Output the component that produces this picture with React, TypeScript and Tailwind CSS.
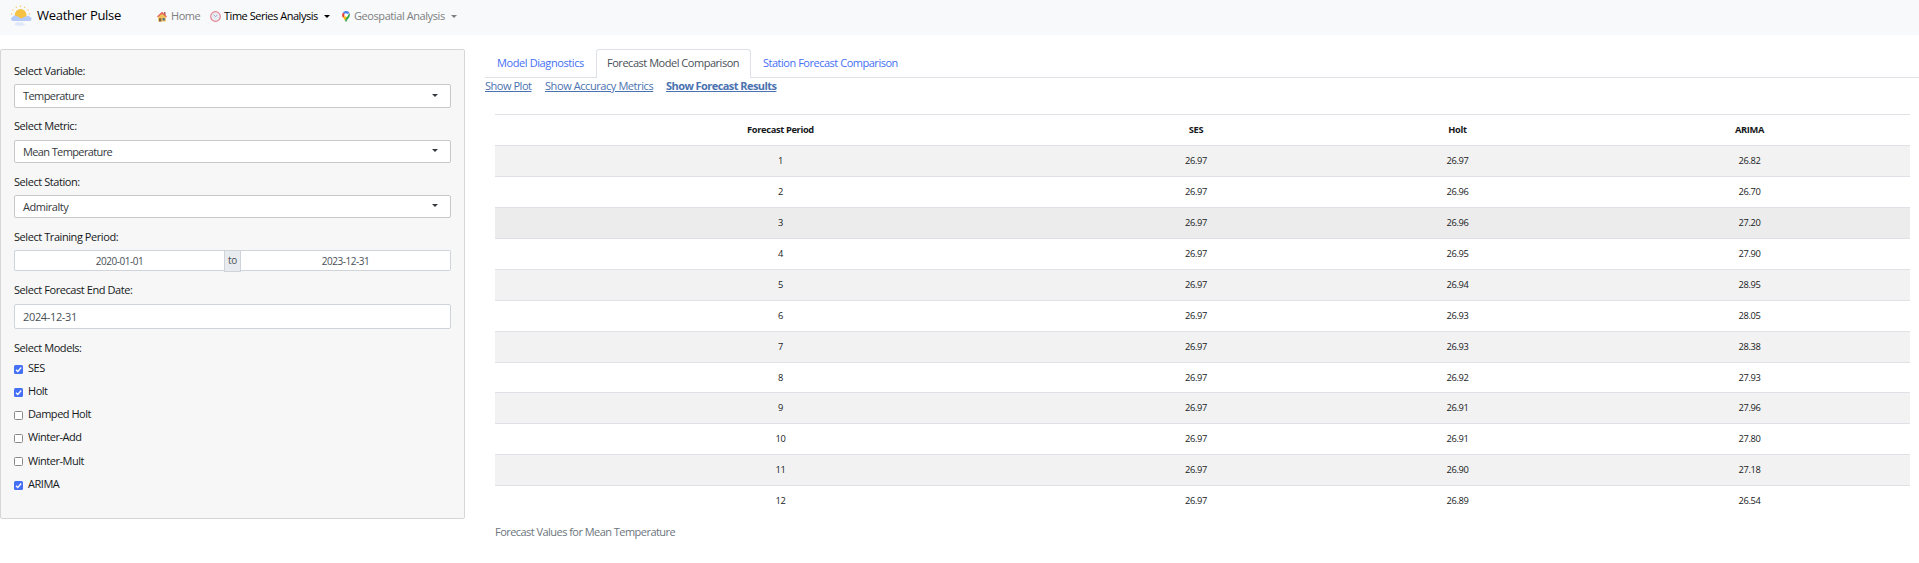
import React from 'react';

const rows: string[][] = [
  ['1', '26.97', '26.97', '26.82'],
  ['2', '26.97', '26.96', '26.70'],
  ['3', '26.97', '26.96', '27.20'],
  ['4', '26.97', '26.95', '27.90'],
  ['5', '26.97', '26.94', '28.95'],
  ['6', '26.97', '26.93', '28.05'],
  ['7', '26.97', '26.93', '28.38'],
  ['8', '26.97', '26.92', '27.93'],
  ['9', '26.97', '26.91', '27.96'],
  ['10', '26.97', '26.91', '27.80'],
  ['11', '26.97', '26.90', '27.18'],
  ['12', '26.97', '26.89', '26.54'],
];

const models: [string, boolean][] = [
  ['SES', true],
  ['Holt', true],
  ['Damped Holt', false],
  ['Winter-Add', false],
  ['Winter-Mult', false],
  ['ARIMA', true],
];

function Caret({ className = '' }: { className?: string }) {
  return (
    <svg viewBox="0 0 6 3" className={`h-[3px] w-[6px] shrink-0 ${className}`} fill="currentColor">
      <path d="M0 0h6L3 3z" />
    </svg>
  );
}

function SunLogo() {
  return (
    <svg viewBox="0 0 22 22" className="h-[22px] w-[22px] shrink-0">
      <g fill="#f5c869">
        <circle cx="10.5" cy="1.2" r=".8" />
        <circle cx="6.3" cy="2.2" r=".7" />
        <circle cx="14.7" cy="2.2" r=".7" />
        <circle cx="3" cy="5" r=".7" />
        <circle cx="18" cy="5" r=".7" />
        <circle cx="1.6" cy="9" r=".7" />
        <circle cx="19.4" cy="9" r=".7" />
      </g>
      <circle cx="10.6" cy="10" r="5.9" fill="#f5c243" />
      <path d="M2.600 16a2.100 2.100 0 0 1 0-4.100c.8-1.700 3.400-1.900 4.500-.3 1.400-.2 2.400.6 2.700 1.700 1 .2 1.700.2 2.600 0 .6-1.500 2.200-2 3.400-1.400.8-1.500 3.400-1.400 4 .2 2.300.2 2.300 3.200.1 3.900z" fill="#b5ccfa" />
      <path d="M5.500 20.300c-1.300-.2-1.300-2 .3-2.200.8-1.600 3-1.400 3.700-.3 1.500-.9 3.300-.4 3.700.8 1.900-.2 2.400 1.300.8 1.700-2 .5-3 1.300-4.700.5z" fill="#dfe8fb" />
    </svg>
  );
}

function HouseIcon() {
  return (
    <svg viewBox="0 0 10 11" className="h-[11px] w-[10px] shrink-0">
      <path d="M7 1h1.500v3H7z" fill="#a8604a" />
      <path d="M1.200 5.200 5 2l3.800 3.200v5.300H1.200z" fill="#f3c257" />
      <path d="M0 5.500 5 .8l5 4.700-.8.800L5 2.800.8 6.300z" fill="#e0605a" />
      <path d="M2 7.200h2.300v3.300H2z" fill="#8b6146" />
      <path d="M5.500 7h2.400v2.500H5.500z" fill="#567b93" />
    </svg>
  );
}

function ClockIcon() {
  return (
    <svg viewBox="0 0 11 11" className="h-[11px] w-[11px] shrink-0">
      <circle cx="5.500" cy="5.500" r="4.800" fill="#e9eef4" stroke="#e58591" strokeWidth="1.200" />
      <path d="M3.400 3.700 5.500 5.700 7.400 4" fill="none" stroke="#8a95a3" strokeWidth=".8" />
    </svg>
  );
}

function PinIcon() {
  return (
    <svg viewBox="0 0 8 11" className="h-[11px] w-[8px] shrink-0">
      <path d="M.8 1.700A4 4 0 0 1 7.500 2.100L4 4z" fill="#4a80ee" />
      <path d="M.8 1.700 4 4 1 6.800C0 5.300-.4 3.500.8 1.700z" fill="#ea4335" />
      <path d="M1 6.800 4 4l1 3-2 2.500C2.500 8.300 1.700 7.600 1 6.800z" fill="#fbbc04" />
      <path d="M7.500 2.100C8.700 5 6.800 6.700 5.600 8.300 4.800 9.400 4.500 11 4 11c-.4 0-.6-1.200-1-2L7.500 2.100z" fill="#34a853" />
      <circle cx="4" cy="4" r="1.800" fill="#fff" />
    </svg>
  );
}

function Label({ children }: { children: React.ReactNode }) {
  return <div className="h-4 leading-4 tracking-[-0.43px]">{children}</div>;
}

function Select({ value, className }: { value: string; className: string }) {
  return (
    <div className={`flex items-center justify-between rounded-[2px] border border-[#c8c8c8] bg-white pl-2 pr-[12px] text-[#343a40] ${className}`}>
      <span className="pt-px">{value}</span>
      <Caret className="-mt-[2px]" />
    </div>
  );
}

export default function App() {
  return (
    <div className="h-[563px] w-[1919px] overflow-hidden whitespace-nowrap bg-white font-['Open_Sans','Noto_Sans',sans-serif] text-[11px] tracking-[-0.47px] text-[#16191c]">
      <nav className="flex h-[35px] items-center bg-[#f8f9fb] pb-[3px] pl-[10px] text-[#7d7f81]">
        <SunLogo />
        <span className="ml-[5px] w-[120px] text-[13px] tracking-[-0.28px] text-black">Weather Pulse</span>
        <HouseIcon />
        <span className="ml-[4px] w-[39px]">Home</span>
        <ClockIcon />
        <span className="ml-[3px] w-[100px] text-black">Time Series Analysis</span>
        <Caret className="text-black" />
        <span className="w-[12px]" />
        <PinIcon />
        <span className="ml-[4px] w-[97px] tracking-[-0.42px]">Geospatial Analysis</span>
        <Caret />
      </nav>

      <div className="flex pt-[14px]">
        <aside className="h-[470px] w-[465px] shrink-0 rounded-[2px] border border-[#d6d6d6] bg-[#f7f7f7] px-[13px] pt-[13px]">
          <Label>Select Variable:</Label>
          <Select value="Temperature" className="mt-[5px] h-6 tracking-[-0.59px]" />
          <div className="h-[10px]" />
          <Label>Select Metric:</Label>
          <Select value="Mean Temperature" className="mt-[6px] h-[23px] tracking-[-0.62px]" />
          <div className="h-[11px]" />
          <Label>Select Station:</Label>
          <Select value="Admiralty" className="mt-[5px] h-[23px]" />
          <div className="h-[11px]" />
          <Label>Select Training Period:</Label>
          <div className="mt-[5px] flex h-[21px] text-center text-[10px] leading-[21px] text-[#495057]">
            <div className="flex-1 rounded-l-[2px] border border-r-0 border-[#ced4da] bg-white">2020-01-01</div>
            <div className="h-[22px] w-[17px] border border-[#ced4da] bg-[#e9ecef] leading-[19px] tracking-[-0.2px]">to</div>
            <div className="flex-1 rounded-r-[2px] border border-l-0 border-[#ced4da] bg-white">2023-12-31</div>
          </div>
          <div className="h-[11px]" />
          <Label>Select Forecast End Date:</Label>
          <div className="mt-[6px] h-[25px] rounded-[2px] border border-[#ced4da] bg-white pl-2 leading-[24px] tracking-[-0.35px] text-[#495057]">2024-12-31</div>
          <div className="h-[11px]" />
          <Label>Select Models:</Label>
          <div className="pt-[0.5px]">
            {models.map(([name, on]) => (
              <div key={name} className="flex h-[23.2px] items-center">
                <svg viewBox="0 0 9 9" className="mt-[2px] h-[9px] w-[9px] shrink-0">
                  {on ? (
                    <>
                      <rect width="9" height="9" rx="1.500" fill="#456ff5" />
                      <path d="M2 4.700 3.800 6.500 7.200 2.500" fill="none" stroke="#fff" strokeWidth="1.300" />
                    </>
                  ) : (
                    <rect x=".5" y=".5" width="8" height="8" rx="1" fill="#fff" stroke="#8a8a8a" />
                  )}
                </svg>
                <span className="ml-[5px]">{name}</span>
              </div>
            ))}
          </div>
        </aside>

        <main className="ml-[20px] flex-1">
          <div className="flex h-[29px] border-b border-[#dee2e6] leading-[28px] text-[#456ff5]">
            <span className="w-[111px] pl-[12px] tracking-[-0.4px]">Model Diagnostics</span>
            <span className="h-[29px] w-[155px] rounded-t-[3px] border border-b-0 border-[#dee2e6] bg-white pl-[10px] leading-[26px] text-[#495057]">Forecast Model Comparison</span>
            <span className="pl-[12px] tracking-[-0.48px]">Station Forecast Comparison</span>
          </div>
          <div className="flex h-[36px] leading-4 text-[#4a72b0] underline">
            <span className="w-[60px]">Show Plot</span>
            <span className="w-[121px] tracking-[-0.42px]">Show Accuracy Metrics</span>
            <span className="font-bold tracking-[-0.56px]">Show Forecast Results</span>
          </div>
          <div className="ml-[10px] w-[1415px] text-center text-[9.3px] tracking-[-0.35px]">
            <div className="grid h-[30.95px] grid-cols-[571px_260px_263px_321px] border-t border-[#dee2e6] font-bold leading-[30px]">
              <span>Forecast Period</span>
              <span>SES</span>
              <span>Holt</span>
              <span>ARIMA</span>
            </div>
            {rows.map((r, i) => (
              <div
                key={r[0]}
                className={`grid h-[30.95px] grid-cols-[571px_260px_263px_321px] border-t border-[#dee2e6] leading-[30px] ${i === 2 ? 'bg-[#ececec]' : i % 2 === 0 ? 'bg-[#f2f2f2]' : 'bg-white'}`}
              >
                {r.map((c, j) => (
                  <span key={j}>{c}</span>
                ))}
              </div>
            ))}
          </div>
          <div className="ml-[10px] mt-[8px] leading-4 tracking-[-0.54px] text-[#6c757d]">Forecast Values for Mean Temperature</div>
        </main>
      </div>
    </div>
  );
}
